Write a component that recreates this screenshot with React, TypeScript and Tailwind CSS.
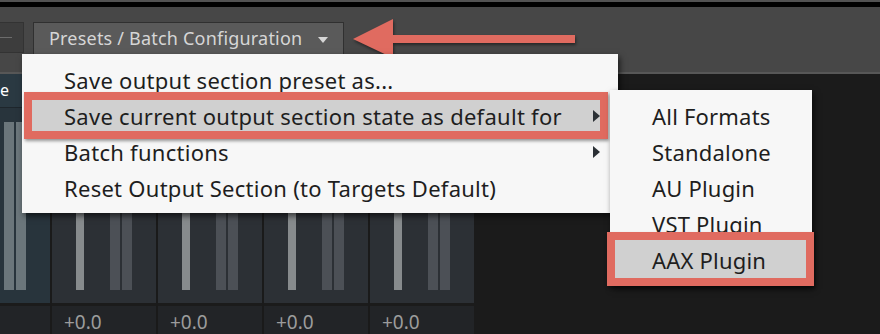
import React from 'react';

const strips = [0, 1, 2, 3];

const MenuArrow: React.FC = () => (
  <svg width="8" height="12" viewBox="0 0 8 12" className="shrink-0">
    <polygon points="0,0 7,6 0,12" fill="#2b3035" />
  </svg>
);

const Strip: React.FC = () => (
  <div className="flex w-[104px] flex-col">
    <div className="flex h-[229px] items-end bg-[#2c3035] pb-[13px] pl-[24px]">
      <div className="h-[168px] w-[8px] bg-[#878b8d]" />
      <div className="ml-[26px] h-[168px] w-[10px] bg-[#4c5056]" />
      <div className="ml-[2px] h-[168px] w-[10px] bg-[#4c5056]" />
    </div>
    <div className="h-[3px] bg-[#1b1b1b]" />
    <div className="h-[28px] bg-[#222427] pl-[12px] pt-[5px] text-[19px] leading-[22px] text-[#9c9c9c]">
      +0.0
    </div>
  </div>
);

const App: React.FC = () => {
  const mainItems = [
    { label: 'Save output section preset as...', sub: false, hl: false },
    { label: 'Save current output section state as default for', sub: true, hl: true },
    { label: 'Batch functions', sub: true, hl: false },
    { label: 'Reset Output Section (to Targets Default)', sub: false, hl: false },
  ];
  const formats = ['All Formats', 'Standalone', 'AU Plugin', 'VST Plugin', 'AAX Plugin'];

  return (
    <div className="relative h-[334px] w-[880px] overflow-hidden bg-[#1b1b1b] font-['Noto_Sans',sans-serif]">
      <div className="h-[2px] bg-[#525252]" />
      <div className="h-[5px] bg-black" />

      {/* header bar */}
      <div className="flex h-[65px] items-start bg-[#474747] pt-[15px]">
        <div className="flex h-[31px] w-[24px] items-center border border-l-0 border-[#333] bg-[#3d3d3d]">
          <div className="h-[1px] w-[12px] bg-[#6c6c6c]" />
        </div>
        <div className="ml-[9px] flex h-[33px] w-[311px] items-center border border-[#303030] bg-[#5a5a5a] pl-[15px] text-[18px] tracking-[0.2px] text-[#d6d6d6]">
          <span>Presets / Batch Configuration</span>
          <svg width="10" height="6" viewBox="0 0 10 6" className="ml-[16px] mt-[3px]">
            <polygon points="0,0 10,0 5,6" fill="#d6d6d6" />
          </svg>
        </div>
      </div>
      <div className="h-[2px] bg-[#575757]" />

      {/* channel strips */}
      <div className="flex h-[260px]">
        <div className="flex w-[50px] flex-col">
          <div className="flex h-[229px] flex-col bg-[#28343c]">
            <div className="h-[33px] bg-[#2a3942] pt-[4px] text-[16px] leading-[24px] text-white">
              <span>e</span>
            </div>
            <div className="h-[1px] bg-[#1e262c]" />
            <div className="flex flex-1 items-end pb-[13px] pl-[4px]">
              <div className="h-[168px] w-[10px] bg-[#6b767b]" />
              <div className="ml-[2px] h-[168px] w-[10px] bg-[#6b767b]" />
            </div>
          </div>
          <div className="h-[3px] bg-[#1b1b1b]" />
          <div className="h-[28px] bg-[#222427]" />
        </div>
        {strips.map((s) => (
          <div key={s} className="flex">
            <div className="w-[2px] bg-[#1a1a1a]" />
            <Strip />
          </div>
        ))}
      </div>

      {/* annotation arrow */}
      <svg className="absolute left-0 top-0" width="880" height="80" viewBox="0 0 880 80">
        <g style={{ filter: 'drop-shadow(1px 2px 1.5px rgba(0,0,0,0.45))' }}>
          <polygon points="353,39 393,19 393,58" fill="#e06b60" />
          <rect x="392" y="35" width="183" height="8" fill="#e06b60" />
        </g>
      </svg>

      {/* main dropdown menu */}
      <div className="absolute left-[22px] top-[54px] w-[596px] bg-[#f7f7f7] py-[8px] pb-[7px] text-[22px] tracking-[0.27px] text-[#1e1e1e] shadow-[2px_3px_6px_rgba(0,0,0,0.6)]">
        {mainItems.map((it) => (
          <div key={it.label} className="relative flex h-[36px] items-center justify-between pl-[42px] pr-[17px]">
            {it.hl && (
              <div className="absolute bottom-[-5px] left-[2px] right-[10px] top-[-6px] border-[8px] border-[#e06b60] bg-[#d0d0d0] shadow-[1px_2px_3px_rgba(0,0,0,0.4)]" />
            )}
            <span className="relative whitespace-nowrap">{it.label}</span>
            {it.sub && (
              <span className="relative">
                <MenuArrow />
              </span>
            )}
          </div>
        ))}
      </div>

      {/* submenu */}
      <div className="absolute left-[610px] top-[90px] w-[202px] bg-[#f7f7f7] py-[8px] text-[22px] tracking-[0.2px] text-[#1e1e1e] shadow-[2px_3px_6px_rgba(0,0,0,0.6)]">
        {formats.map((f) => (
          <div key={f} className="relative flex h-[36px] items-center pl-[42px]">
            {f === 'AAX Plugin' && (
              <div className="absolute bottom-[-8px] left-[-3px] right-[-2px] top-[-10px] border-[8px] border-[#e06b60] bg-[#d0d0d0] shadow-[1px_2px_3px_rgba(0,0,0,0.4)]" />
            )}
            <span className="relative whitespace-nowrap">{f}</span>
          </div>
        ))}
      </div>
    </div>
  );
};

export default App;
